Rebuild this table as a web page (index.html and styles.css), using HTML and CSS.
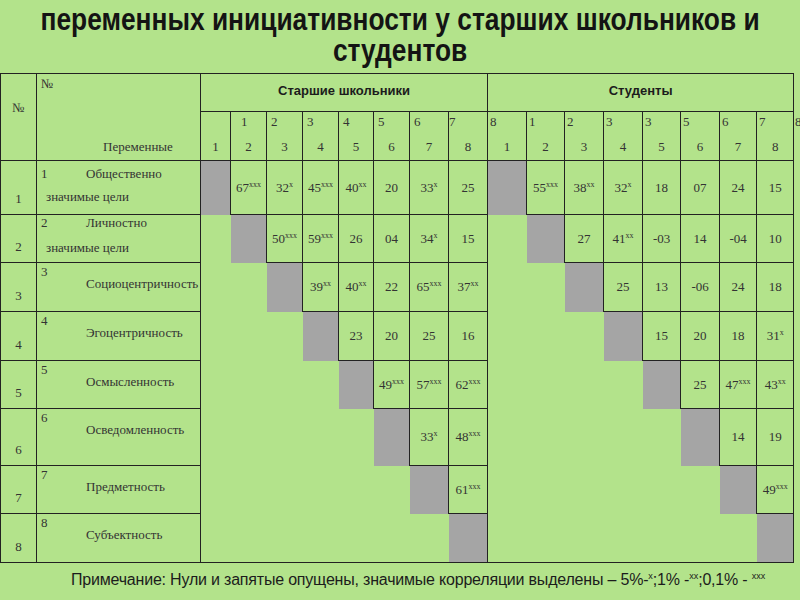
FILE: index.html
```html
<!DOCTYPE html>
<html lang="ru">
<head>
<meta charset="utf-8">
<link rel="stylesheet" href="styles.css">
</head>
<body>
<h1 class="title"><span class="title-in">переменных инициативности у старших школьников и<br>студентов</span></h1>
<table class="corr">
<colgroup>
<col style="width:36px"><col style="width:164px">
<col style="width:30px"><col style="width:36px"><col style="width:36px"><col style="width:36px"><col style="width:35px"><col style="width:36px"><col style="width:39px"><col style="width:39px">
<col style="width:39px"><col style="width:38px"><col style="width:39px"><col style="width:39px"><col style="width:38px"><col style="width:39px"><col style="width:37px"><col style="width:37px">
</colgroup>
<tr class="h1">
<td class="hn" rowspan="2">№</td>
<td class="hv" rowspan="2"><div class="hv-no">№</div><div class="hv-name">Переменные</div></td>
<td class="grp" colspan="8">Старшие школьники</td>
<td class="grp" colspan="8">Студенты</td>
</tr>
<tr class="h2">
<td class="hc"><div class="tn">&nbsp;</div><div class="bn">1</div></td>
<td class="hc"><div class="tn tn-wide">1</div><div class="bn">2</div></td>
<td class="hc"><div class="tn">2</div><div class="bn">3</div></td>
<td class="hc"><div class="tn">3</div><div class="bn">4</div></td>
<td class="hc"><div class="tn">4</div><div class="bn">5</div></td>
<td class="hc"><div class="tn">5</div><div class="bn">6</div></td>
<td class="hc"><div class="tn">6</div><div class="bn">7</div></td>
<td class="hc"><div class="tn tn-zero">7</div><div class="bn">8</div></td>
<td class="hc"><div class="tn tn-low">8</div><div class="bn">1</div></td>
<td class="hc"><div class="tn tn-low">1</div><div class="bn">2</div></td>
<td class="hc"><div class="tn tn-low">2</div><div class="bn">3</div></td>
<td class="hc"><div class="tn tn-low">3</div><div class="bn">4</div></td>
<td class="hc"><div class="tn tn-low">3</div><div class="bn">5</div></td>
<td class="hc"><div class="tn tn-low">5</div><div class="bn">6</div></td>
<td class="hc"><div class="tn tn-low">6</div><div class="bn">7</div></td>
<td class="hc"><div class="tn tn-low">7<span class="stray">8</span></div><div class="bn">8</div></td>
</tr>

<tr class="r r1">
<td class="ln">1</td>
<td class="lv"><div class="l1"><span class="n">1</span>Общественно</div><div class="l2">значимые цели</div></td>
<td class="g"></td><td class="v">67<span class="s">xxx</span></td><td class="v">32<span class="s">x</span></td><td class="v">45<span class="s">xxx</span></td><td class="v">40<span class="s">xx</span></td><td class="v">20</td><td class="v">33<span class="s">x</span></td><td class="v">25</td>
<td class="g"></td><td class="v">55<span class="s">xxx</span></td><td class="v">38<span class="s">xx</span></td><td class="v">32<span class="s">x</span></td><td class="v">18</td><td class="v">07</td><td class="v">24</td><td class="v">15</td>
</tr>
<tr class="r r2">
<td class="ln">2</td>
<td class="lv"><div class="l1"><span class="n">2</span>Личностно</div><div class="l2">значимые цели</div></td>
<td class="e"></td><td class="g"></td><td class="v">50<span class="s">xxx</span></td><td class="v">59<span class="s">xxx</span></td><td class="v">26</td><td class="v">04</td><td class="v">34<span class="s">x</span></td><td class="v">15</td>
<td class="e"></td><td class="g"></td><td class="v">27</td><td class="v">41<span class="s">xx</span></td><td class="v">-03</td><td class="v">14</td><td class="v">-04</td><td class="v">10</td>
</tr>
<tr class="r r3">
<td class="ln">3</td>
<td class="lv"><div class="n1">3</div><div class="nm">Социоцентричность</div></td>
<td class="e"></td><td class="e"></td><td class="g"></td><td class="v">39<span class="s">xx</span></td><td class="v">40<span class="s">xx</span></td><td class="v">22</td><td class="v">65<span class="s">xxx</span></td><td class="v">37<span class="s">xx</span></td>
<td class="e"></td><td class="e"></td><td class="g"></td><td class="v">25</td><td class="v">13</td><td class="v">-06</td><td class="v">24</td><td class="v">18</td>
</tr>
<tr class="r r4">
<td class="ln">4</td>
<td class="lv"><div class="n1">4</div><div class="nm">Эгоцентричность</div></td>
<td class="e"></td><td class="e"></td><td class="e"></td><td class="g"></td><td class="v">23</td><td class="v">20</td><td class="v">25</td><td class="v">16</td>
<td class="e"></td><td class="e"></td><td class="e"></td><td class="g"></td><td class="v">15</td><td class="v">20</td><td class="v">18</td><td class="v">31<span class="s">x</span></td>
</tr>
<tr class="r r5">
<td class="ln">5</td>
<td class="lv"><div class="n1">5</div><div class="nm">Осмысленность</div></td>
<td class="e"></td><td class="e"></td><td class="e"></td><td class="e"></td><td class="g"></td><td class="v">49<span class="s">xxx</span></td><td class="v">57<span class="s">xxx</span></td><td class="v">62<span class="s">xxx</span></td>
<td class="e"></td><td class="e"></td><td class="e"></td><td class="e"></td><td class="g"></td><td class="v">25</td><td class="v">47<span class="s">xxx</span></td><td class="v">43<span class="s">xx</span></td>
</tr>
<tr class="r r6">
<td class="ln">6</td>
<td class="lv"><div class="n1">6</div><div class="nm">Осведомленность</div></td>
<td class="e"></td><td class="e"></td><td class="e"></td><td class="e"></td><td class="e"></td><td class="g"></td><td class="v">33<span class="s">x</span></td><td class="v">48<span class="s">xxx</span></td>
<td class="e"></td><td class="e"></td><td class="e"></td><td class="e"></td><td class="e"></td><td class="g"></td><td class="v">14</td><td class="v">19</td>
</tr>
<tr class="r r7">
<td class="ln">7</td>
<td class="lv"><div class="n1">7</div><div class="nm">Предметность</div></td>
<td class="e"></td><td class="e"></td><td class="e"></td><td class="e"></td><td class="e"></td><td class="e"></td><td class="g"></td><td class="v">61<span class="s">xxx</span></td>
<td class="e"></td><td class="e"></td><td class="e"></td><td class="e"></td><td class="e"></td><td class="e"></td><td class="g"></td><td class="v">49<span class="s">xxx</span></td>
</tr>
<tr class="r r8">
<td class="ln">8</td>
<td class="lv"><div class="n1">8</div><div class="nm">Субъектность</div></td>
<td class="e"></td><td class="e"></td><td class="e"></td><td class="e"></td><td class="e"></td><td class="e"></td><td class="e"></td><td class="g blk"></td>
<td class="e"></td><td class="e"></td><td class="e"></td><td class="e"></td><td class="e"></td><td class="e"></td><td class="e"></td><td class="g blk"></td>
</tr>
</table>
<p class="note">Примечание: Нули и запятые опущены, значимые корреляции выделены – 5%-<span class="ns">x</span>;1% -<span class="ns">xx</span>;0,1% - <span class="ns">xxx</span></p>
</body>
</html>
```
FILE: styles.css
```css
html, body {
  margin: 0;
  padding: 0;
  background: #b3e38b;
  width: 800px;
  height: 600px;
  overflow: hidden;
}

.title {
  margin: 0;
  height: 73px;
  padding-top: 4px;
  box-sizing: border-box;
  display: flex;
  justify-content: center;
  align-items: flex-start;
  text-align: center;
  font-family: "Liberation Sans", Arial, sans-serif;
  font-weight: bold;
  font-size: 31px;
  line-height: 31px;
  color: #141414;
  white-space: nowrap;
}
.title-in {
  display: block;
  flex: none;
  transform: scaleX(0.85);
  transform-origin: center top;
}

.corr {
  border-collapse: collapse;
  table-layout: fixed;
  width: 794px;
  font-family: "Liberation Serif", "Times New Roman", serif;
  font-size: 13px;
  color: #333;
}

td {
  padding: 0;
}

.h1 { height: 38px; }
.h2 { height: 49px; }

.hn, .hv, .grp, .hc {
  border: 1px solid #222;
}

.hn {
  vertical-align: top;
  text-align: center;
  padding-top: 28px;
  line-height: 12px;
}

.hv {
  vertical-align: top;
  line-height: 12px;
}
.hv-no {
  padding: 4px 0 0 4px;
}
.hv-name {
  margin-top: 51px;
  padding-left: 66px;
}

.grp {
  text-align: center;
  vertical-align: middle;
  padding-bottom: 5px;
  font-family: "Liberation Sans", Arial, sans-serif;
  font-weight: bold;
  font-size: 13px;
  color: #1c1c1c;
}

.hc {
  vertical-align: top;
  line-height: 12px;
}
.tn {
  padding: 4px 0 0 4px;
  text-align: left;
  position: relative;
}
.tn-wide { padding-left: 10px; }
.tn-zero { padding-left: 0; }
.tn-low { padding-left: 2px; }
.stray {
  position: absolute;
  left: 38px;
  top: 4px;
}
.bn {
  margin-top: 13px;
  text-align: center;
}

.r1 { height: 54px; }
.r2 { height: 48px; }
.r3 { height: 49px; }
.r4 { height: 49px; }
.r5 { height: 48px; }
.r6 { height: 57px; }
.r7 { height: 48px; }
.r8 { height: 49px; }

.ln {
  border: 1px solid #222;
  text-align: center;
  vertical-align: bottom;
  padding-bottom: 9px;
  line-height: 12px;
}

.lv {
  border: 1px solid #222;
  vertical-align: top;
  line-height: 12px;
  padding-left: 4px;
  white-space: nowrap;
}
.r1 .lv { padding-top: 7px; }
.r2 .lv { padding-top: 2px; }
.l1 .n {
  display: inline-block;
  width: 45px;
}
.l2 {
  padding-left: 5px;
  margin-top: 11px;
}
.r2 .l2 { margin-top: 13px; }
.n1 { padding-top: 3px; }
.nm { padding-left: 45px; }

.g {
  background: #a5a5a5;
}
.v {
  border: 1px solid #222;
  text-align: center;
  vertical-align: middle;
  white-space: nowrap;
}
.s {
  font-size: 8px;
  vertical-align: 5px;
  line-height: 0;
}
.blk {
  border-right: 1px solid #222;
}
.r8 td { border-bottom: 1px solid #222; }

.note {
  margin: 9px 0 0 71px;
  font-family: "Liberation Sans", Arial, sans-serif;
  font-size: 16px;
  letter-spacing: -0.2px;
  line-height: 16px;
  color: #1c1c1c;
  white-space: nowrap;
}
.ns {
  font-size: 9px;
  vertical-align: 6px;
  line-height: 0;
  letter-spacing: 0;
}
```
